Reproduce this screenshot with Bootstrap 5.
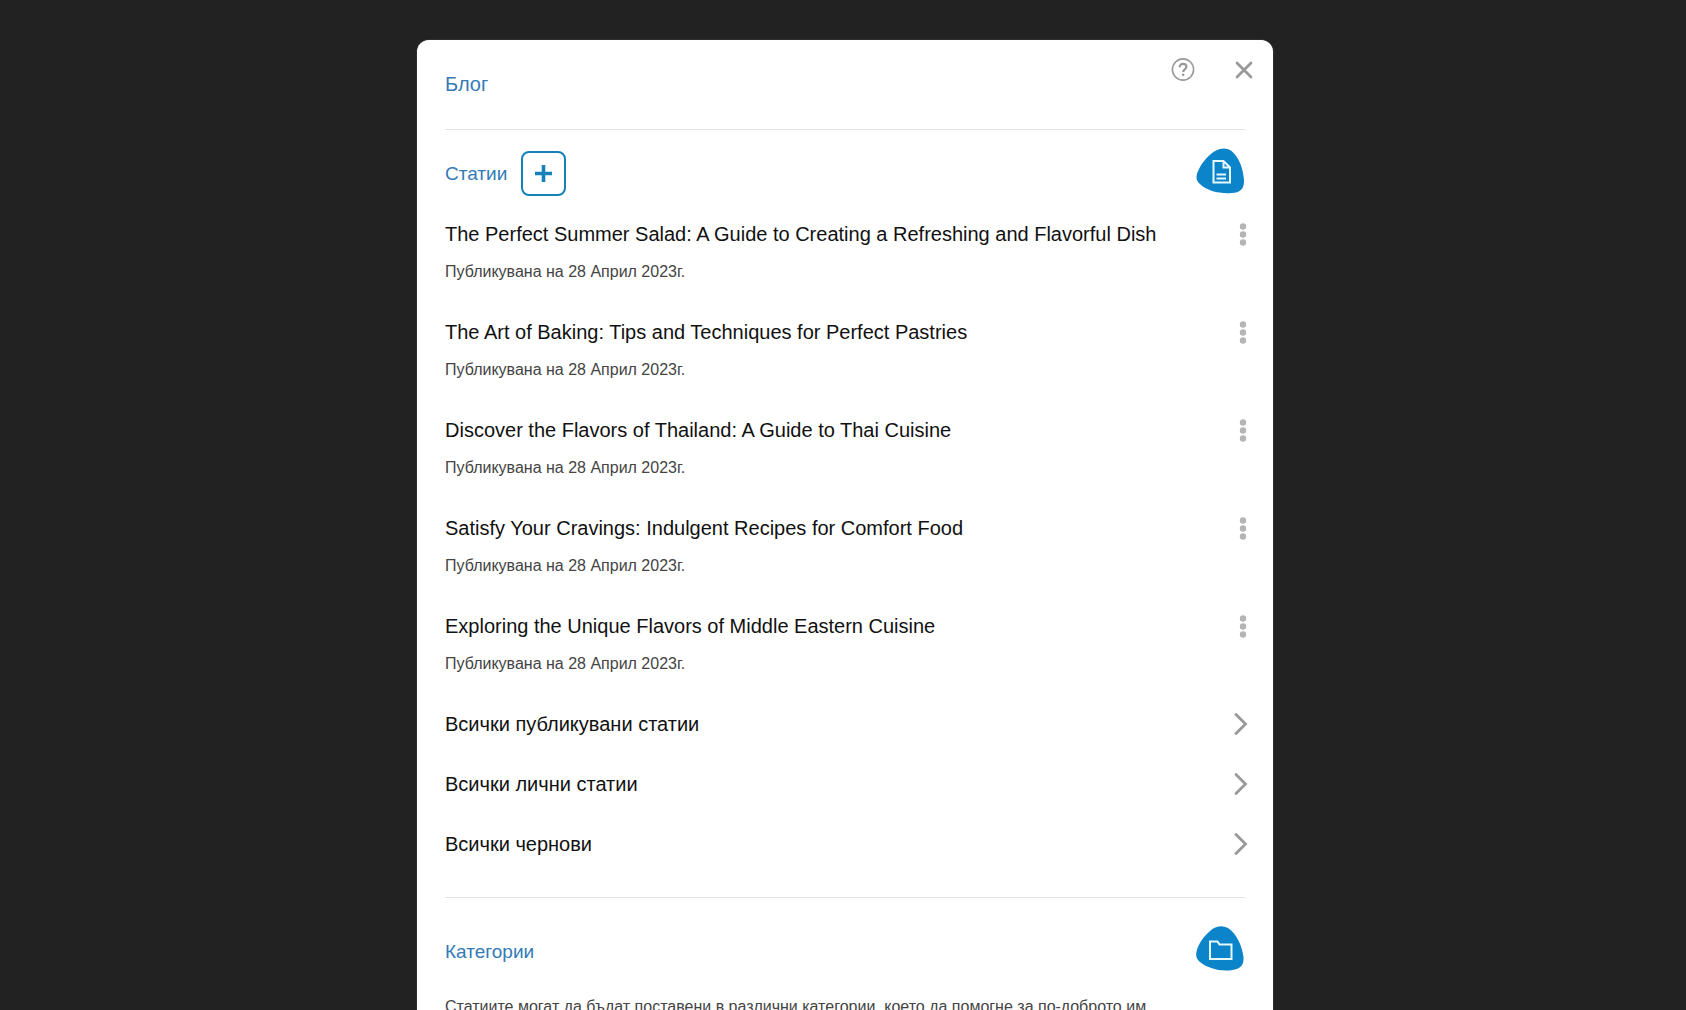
<!DOCTYPE html>
<html lang="bg">
<head>
<meta charset="utf-8">
<meta name="viewport" content="width=device-width, initial-scale=1">
<title>Блог</title>
<link href="https://cdn.jsdelivr.net/npm/bootstrap@5.3.0/dist/css/bootstrap.min.css" rel="stylesheet">
<style>
body { background: #222; font-family: "Liberation Sans", Arial, sans-serif; color: #111; }
.blog-shell { padding: 40px 0 0 4px; }
.blog-panel { max-width: 856px; min-height: 100%; border-radius: 12px 12px 0 0; padding: 0 28px 40px; box-shadow: 0 0 1px #aaa; }
.panel-head { height: 89px; padding-top: 16px; }
.panel-title { font-size: 20px; line-height: 28px; color: #337ab7; font-weight: 400; margin: 0; }
.section-head .panel-title { font-size: 19px; }
.panel-head .panel-title { margin-top: 14px; }
.head-actions { gap: 36px; margin-right: -11px; }
.ghost-btn { background: none; border: 0; padding: 0; line-height: 0; color: #999; }
.rule { height: 1px; background: #e2e2e2; margin: 0; border: 0; opacity: 1; }
.section-head { min-height: 51px; margin-top: 18px; }
.section-head.second { margin-top: 28px; }
.head-label { gap: 14px; height: 51px; }
.add-btn { width: 45px; height: 45px; border: 2px solid #1680b8; border-radius: 8px; background: #fff; color: #1680b8; padding: 0; line-height: 0; }
.post-list { gap: 35px; margin: 21px 0 18px; }
.post-name { font-size: 20px; line-height: 28px; margin: 0 0 12px; font-weight: 400; }
.post-list { gap: 34px; }
.post-name a, .more-link { color: #111; text-decoration: none; }
.post-date { font-size: 16px; line-height: 24px; margin: 0; color: #444; }
.menu-btn { margin-right: -3px; height: 28px; color: #b5b5b5; }
.more-link { font-size: 20px; line-height: 28px; height: 60px; margin-right: -3px; }
.more-list { margin-bottom: 23px; }
.note { font-size: 16px; line-height: 24px; margin: 18px 80px 0 0; color: #444; }
</style>
<script src="https://cdn.jsdelivr.net/npm/bootstrap@5.3.0/dist/js/bootstrap.bundle.min.js"></script>
</head>
<body>
<div class="blog-shell vh-100 overflow-hidden">
<main class="blog-panel bg-white mx-auto">
  <header class="panel-head d-flex justify-content-between align-items-start">
    <h1 class="panel-title">Блог</h1>
    <div class="head-actions d-flex align-items-center">
      <button class="ghost-btn" type="button" aria-label="Помощ">
        <svg width="26" height="28" viewBox="0 0 26 28" fill="none" stroke="currentColor"><circle cx="13" cy="13.500" r="10.600" stroke-width="1.600"/><path d="M9.700 11.200C9.700 9 11 7.800 13 7.800s3.400 1.200 3.400 3c0 2.400-3.300 2.600-3.300 5.200" stroke-width="2.200"/><circle cx="13.100" cy="18.700" r="1.300" fill="currentColor" stroke="none"/></svg>
      </button>
      <button class="ghost-btn" type="button" aria-label="Затвори">
        <svg width="24" height="28" viewBox="0 0 24 28" fill="none" stroke="currentColor" stroke-width="2.800" stroke-linecap="round"><path d="M5 7l14 14M19 7L5 21"/></svg>
      </button>
    </div>
  </header>
  <hr class="rule">

  <section>
    <div class="section-head d-flex justify-content-between align-items-start">
      <div class="head-label d-flex align-items-center">
        <h2 class="panel-title">Статии</h2>
        <button class="add-btn" type="button" aria-label="Добави статия">
          <svg width="17" height="17" viewBox="0 0 17 17" stroke="currentColor" stroke-width="3.600"><path d="M8.500 0v17M0 8.500h17"/></svg>
        </button>
      </div>
      <svg width="49" height="46" viewBox="0 0 49 46"><path d="M20 2.500Q28-1.500 35 2.500C43 9 47 20 48 32c.5 9-4 13-12 13C24 46 11 43 4 36-1 32 0 27 3 21 7 13 13 6.500 20 2.500Z" fill="#0b84c9"/><path d="M17.500 13h10l6.500 6.500V34.500H17.500ZM27.500 13v6.500H34M20.500 26.500h9.500M20.500 30.500h9.500" fill="none" stroke="#e8f8ff" stroke-width="2"/></svg>
    </div>
    <div class="post-list d-flex flex-column">
      <article class="d-flex justify-content-between align-items-start">
        <div><h3 class="post-name"><a href="#">The Perfect Summer Salad: A Guide to Creating a Refreshing and Flavorful Dish</a></h3><p class="post-date">Публикувана на 28 Април 2023г.</p></div>
        <button class="ghost-btn menu-btn" type="button" aria-label="Меню"><svg width="10" height="28" viewBox="0 0 10 28" fill="currentColor"><circle cx="5" cy="6.500" r="3.200"/><circle cx="5" cy="14.500" r="3.200"/><circle cx="5" cy="22.500" r="3.200"/></svg></button>
      </article>
      <article class="d-flex justify-content-between align-items-start">
        <div><h3 class="post-name"><a href="#">The Art of Baking: Tips and Techniques for Perfect Pastries</a></h3><p class="post-date">Публикувана на 28 Април 2023г.</p></div>
        <button class="ghost-btn menu-btn" type="button" aria-label="Меню"><svg width="10" height="28" viewBox="0 0 10 28" fill="currentColor"><circle cx="5" cy="6.500" r="3.200"/><circle cx="5" cy="14.500" r="3.200"/><circle cx="5" cy="22.500" r="3.200"/></svg></button>
      </article>
      <article class="d-flex justify-content-between align-items-start">
        <div><h3 class="post-name"><a href="#">Discover the Flavors of Thailand: A Guide to Thai Cuisine</a></h3><p class="post-date">Публикувана на 28 Април 2023г.</p></div>
        <button class="ghost-btn menu-btn" type="button" aria-label="Меню"><svg width="10" height="28" viewBox="0 0 10 28" fill="currentColor"><circle cx="5" cy="6.500" r="3.200"/><circle cx="5" cy="14.500" r="3.200"/><circle cx="5" cy="22.500" r="3.200"/></svg></button>
      </article>
      <article class="d-flex justify-content-between align-items-start">
        <div><h3 class="post-name"><a href="#">Satisfy Your Cravings: Indulgent Recipes for Comfort Food</a></h3><p class="post-date">Публикувана на 28 Април 2023г.</p></div>
        <button class="ghost-btn menu-btn" type="button" aria-label="Меню"><svg width="10" height="28" viewBox="0 0 10 28" fill="currentColor"><circle cx="5" cy="6.500" r="3.200"/><circle cx="5" cy="14.500" r="3.200"/><circle cx="5" cy="22.500" r="3.200"/></svg></button>
      </article>
      <article class="d-flex justify-content-between align-items-start">
        <div><h3 class="post-name"><a href="#">Exploring the Unique Flavors of Middle Eastern Cuisine</a></h3><p class="post-date">Публикувана на 28 Април 2023г.</p></div>
        <button class="ghost-btn menu-btn" type="button" aria-label="Меню"><svg width="10" height="28" viewBox="0 0 10 28" fill="currentColor"><circle cx="5" cy="6.500" r="3.200"/><circle cx="5" cy="14.500" r="3.200"/><circle cx="5" cy="22.500" r="3.200"/></svg></button>
      </article>
    </div>
    <nav class="more-list">
      <a class="more-link d-flex justify-content-between align-items-center" href="#">Всички публикувани статии <svg width="14" height="24" viewBox="0 0 14 24" fill="none" stroke="#999" stroke-width="2.800" stroke-linecap="round"><path d="M2 2.500l9.500 9.500-9.500 9.500"/></svg></a>
      <a class="more-link d-flex justify-content-between align-items-center" href="#">Всички лични статии <svg width="14" height="24" viewBox="0 0 14 24" fill="none" stroke="#999" stroke-width="2.800" stroke-linecap="round"><path d="M2 2.500l9.500 9.500-9.500 9.500"/></svg></a>
      <a class="more-link d-flex justify-content-between align-items-center" href="#">Всички чернови <svg width="14" height="24" viewBox="0 0 14 24" fill="none" stroke="#999" stroke-width="2.800" stroke-linecap="round"><path d="M2 2.500l9.500 9.500-9.500 9.500"/></svg></a>
    </nav>
  </section>
  <hr class="rule">

  <section>
    <div class="section-head second d-flex justify-content-between align-items-start">
      <div class="head-label d-flex align-items-center"><h2 class="panel-title">Категории</h2></div>
      <svg width="49" height="46" viewBox="0 0 49 46"><path d="M18 2Q25-1.500 32 2C41 8 46 20 47.500 31c.5 8-3 12-11 13C24 46 11 42 4 36-1 32-.5 27 2 21 6 12 12 6 18 2Z" fill="#0b84c9"/><path d="M14 15.500h7.500l2 3H35.500V33H14Z" fill="none" stroke="#e8f8ff" stroke-width="2"/></svg>
    </div>
    <p class="note">Статиите могат да бъдат поставени в различни категории, което да помогне за по-доброто им</p>
  </section>
</main>
</div>
</body>
</html>
